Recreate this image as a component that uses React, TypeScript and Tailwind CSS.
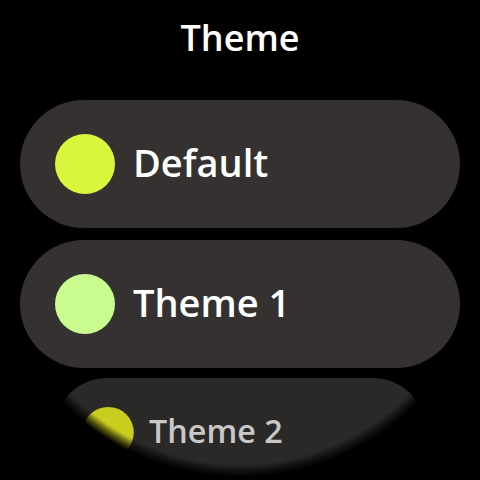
import React from "react";

type ThemeItem = {
  name: string;
  swatch: string;
};

const items: ThemeItem[] = [
  { name: "Default", swatch: "bg-[#d9f63c]" },
  { name: "Theme 1", swatch: "bg-[#c9fb8f]" },
];

function ThemeChip({ item }: { item: ThemeItem }) {
  return (
    <div className="mx-[20px] flex h-[128px] shrink-0 items-center gap-[18px] rounded-full bg-[#343130] pl-[35px]">
      <div className={`h-[60px] w-[60px] shrink-0 rounded-full ${item.swatch}`} />
      <span className="-mt-[4px] text-[38px] font-semibold leading-none text-white">{item.name}</span>
    </div>
  );
}

export default function App() {
  return (
    <div
      className="relative h-[480px] w-[480px] overflow-hidden bg-black"
      style={{ fontFamily: '"Open Sans", Roboto, sans-serif' }}
    >
      <div className="flex h-full flex-col">
        <h1 className="mt-[20px] text-center text-[36px] font-semibold leading-none text-white">Theme</h1>

        <div className="mt-[44px] flex flex-col gap-[12px]">
          {items.map((item) => (
            <ThemeChip key={item.name} item={item} />
          ))}

          {/* partly scrolled-off chip, shrunk toward the round edge */}
          <div className="-mt-[2px] mx-[20px] flex h-[128px] shrink-0 origin-top scale-[0.85] items-center gap-[18px] rounded-full bg-[#2b2928] pl-[35px]">
            <div className="h-[60px] w-[60px] shrink-0 rounded-full bg-[#c9cd1e]" />
            <span className="-mt-[4px] text-[38px] font-semibold leading-none text-[#c8c8c8]">Theme 2</span>
          </div>
        </div>
      </div>

      {/* round watch face mask */}
      <div className="pointer-events-none absolute inset-0 bg-[radial-gradient(circle_at_240px_226px,transparent_238px,rgba(0,0,0,0.6)_245px,black_251px)]" />
    </div>
  );
}
